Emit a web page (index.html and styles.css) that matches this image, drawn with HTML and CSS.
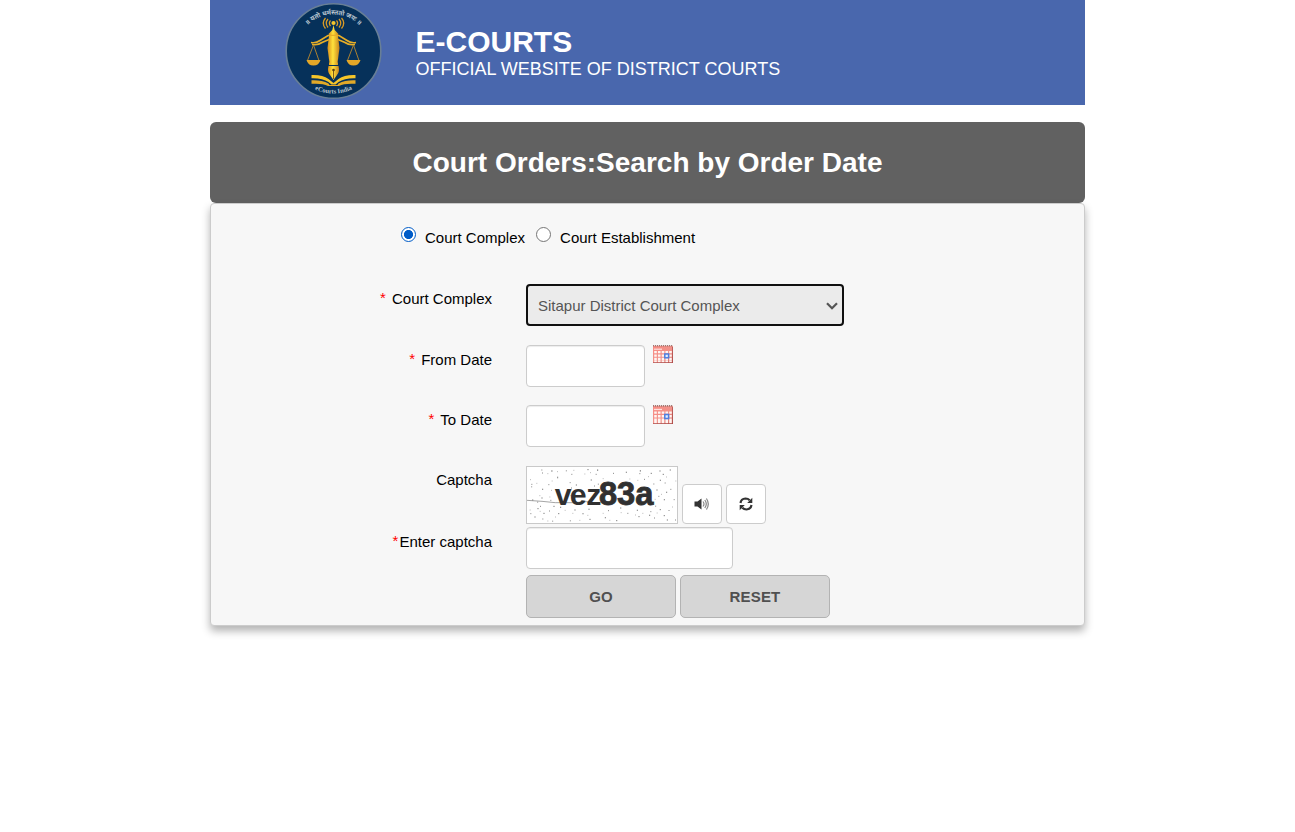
FILE: index.html
```html
<!DOCTYPE html>
<html lang="en">
<head>
<meta charset="utf-8">
<title>Court Orders: Search by Order Date</title>
<link rel="stylesheet" href="styles.css">
</head>
<body>
<svg class="defs" width="0" height="0" aria-hidden="true">
  <defs>
    <linearGradient id="cal-red" x1="0" y1="0" x2="1" y2="1">
      <stop offset="0" stop-color="#f98c84"/><stop offset="0.6" stop-color="#f0928a"/><stop offset="1" stop-color="#cc625e"/>
    </linearGradient>
    <linearGradient id="gold" x1="0" y1="0" x2="1" y2="0">
      <stop offset="0" stop-color="#d98f1a"/><stop offset="0.45" stop-color="#ffe23c"/><stop offset="1" stop-color="#c9831d"/>
    </linearGradient>
    <symbol id="calendar" viewBox="0 0 20 18" preserveAspectRatio="none">
      <rect y="1" width="20" height="17" fill="url(#cal-red)"/>
      <path d="M0 .8h20" stroke="#a57670" stroke-width="1.600" stroke-dasharray="1.200 .8"/>
      <path d="M1 4.200h8" stroke="#ffdfda" stroke-width="1.200"/>
      <path d="M1.200 7.200h17.600M1.200 10.600h17.600M1.200 13.900h17.600M1.200 16.400h17.600" stroke="#fff5f2" stroke-width="2.300" stroke-dasharray="2.600 1.150"/>
      <rect x="11.800" y="9" width="3.800" height="3.800" fill="#e4efff" stroke="#4e7fe0" stroke-width="1.500"/>
      <path d="M19.600 2v16M0 17.700h20" stroke="#a94a48" stroke-width=".8"/>
    </symbol>
  </defs>
</svg>
<div class="page">
  <header class="site-header">
    <svg class="logo" viewBox="0 0 106 106" aria-label="eCourts India">
      <circle cx="53.500" cy="51" r="47.300" fill="#06315a" stroke="#687f96" stroke-width="1.600"/>
      <path id="arc-top" d="M17 51a36.500 36.500 0 0 1 73 0" fill="none"/>
      <path id="arc-bottom" d="M11 51a42.500 42.500 0 0 0 85 0" fill="none"/>
      <text class="seal hindi"><textPath href="#arc-top" startOffset="50%" text-anchor="middle">॥ यतो धर्मस्ततो जयः ॥</textPath></text>
      <text class="seal"><textPath href="#arc-bottom" startOffset="50%" text-anchor="middle">eCourts India</textPath></text>
      <path d="M50.500 20.500q-2.200 2.500 0 5.500M48 19q-3.500 4 0 8.500M45.500 18q-4.500 5 0 10.500M56.500 20.500q2.200 2.500 0 5.500M59 19q3.500 4 0 8.500M61.500 18q4.500 5 0 10.500" fill="none" stroke="#d99b25" stroke-width="1.300"/>
      <circle cx="53.500" cy="23" r="2.100" fill="#f5c62c"/>
      <path d="M53.500 25l1.200 5 3.800 4-1.500 3h-7l-1.500-3 3.800-4z" fill="url(#gold)"/>
      <path d="M31 42.500q5 1 9-2l8-5h11l8 5q4 3 9 2M32 44.500q6 1 10-2l7-3h9l7 3q4 3 10 2" fill="none" stroke="#e6ad27" stroke-width="1.700"/>
      <path d="M49 36h9l1.500 12-2 15h-8l-2-15z" fill="url(#gold)"/>
      <path d="M49 62.500h9v2.500h-9zM48.500 66h10q1.500 6-1.500 9l-3.500 5-3.500-5q-3-3-1.500-9z" fill="url(#gold)"/>
      <path d="M53.500 70v9" stroke="#6c4819" stroke-width=".9"/><circle cx="53.500" cy="70" r="1.300" fill="#5b3d12"/>
      <path d="M33.500 45l-5.800 15M33.500 45l5.300 15M73.500 45l-5.800 15M73.500 45l5.300 15" fill="none" stroke="#a98032" stroke-width="1"/>
      <path d="M26.500 60h14q-1.500 5.500-7 5.500t-7-5.500zM66.500 60h14q-1.500 5.500-7 5.500t-7-5.500z" fill="#e4a728"/>
      <path d="M31.500 75q11-.5 17 4l5 4 5-4q6-4.500 17-4v3.200q-11-.3-17 3.800l-3 2.500h-4l-3-2.500q-6-4.100-17-3.800z" fill="#f5c62a"/>
      <path d="M31.500 80.300q10-.5 17 3.200l1 1.500h8l1-1.500q7-3.700 17-3.200v3.500q-11-.8-16.500 2.200h-11q-5.500-3-16.500-2.200z" fill="#e2a928"/>
    </svg>
    <div class="site-name">
      <div class="site-title">E-COURTS</div>
      <div class="site-subtitle">OFFICIAL WEBSITE OF DISTRICT COURTS</div>
    </div>
  </header>
  <h1 class="heading">Court Orders:Search by Order Date</h1>
  <form class="panel">
    <div class="radios">
      <input class="radio" type="radio" name="scope" id="complex" checked><label class="radio-first" for="complex">Court Complex</label>
      <input class="radio" type="radio" name="scope" id="establishment"><label for="establishment">Court Establishment</label>
    </div>
    <div class="row select-row">
      <label class="label"><span class="star spaced">*</span>Court Complex</label>
      <div class="select-wrap">
        <select class="select"><option>Sitapur District Court Complex</option></select>
        <svg class="chevron" viewBox="0 0 12 8"><path d="M1 1.300L6 6.300l5-5" fill="none" stroke="#555" stroke-width="2.200"/></svg>
      </div>
    </div>
    <div class="row date-row">
      <label class="label"><span class="star spaced">*</span>From Date</label>
      <input class="field date"><svg class="calendar"><use href="#calendar"/></svg>
    </div>
    <div class="row date-row to-row">
      <label class="label"><span class="star spaced">*</span>To Date</label>
      <input class="field date"><svg class="calendar tall"><use href="#calendar"/></svg>
    </div>
    <div class="row captcha-row">
      <label class="label captcha-label">Captcha</label>
      <svg class="captcha" viewBox="18 18 456 174">
        <rect x="19.500" y="19.500" width="453" height="171" fill="#fff" stroke="#c9c9c9" stroke-width="3"/>
        <path class="noise" d="M64 30h3M66 39h3M93 33h5M139 31v3M154 43h3M202 29h4M233 28v5M227 43h3M279 40h3M319 35v4M361 30v5M358 41h3M372 58h3M392 40h4M420 31v4M428 43h4M449 30h4M34 73h3M35 79v3M68 86v4M66 112v4M85 74h3M113 50v5M149 68h3M153 84h3M169 73v4M212 60h4M222 78h3M235 71v3M400 72h3M421 59v4M434 69h3M409 90h4M440 95v4M451 88h3M415 109h3M433 117v4M461 119h3M36 120h4M53 125v3M91 121h3M52 146h4M60 139h3M87 153h3M100 139h4M122 140v4M163 150h4M207 146v4M264 152h3M300 144h4M352 149v4M391 155h3M407 137v3M419 149h4M447 150v3M31 161h3M45 169v4M70 160h4M67 177h3M98 182v3M114 161h4M151 181v3M189 159v4M208 178h4M256 171v4M288 182h4M322 160h3M355 170h4M389 164v4M402 174h3M431 167h4M442 178v4M465 180h3"/>
        <path class="noise faint" d="M82 41h3M111 35h3M160 31h3M193 42h3M210 38h3M248 56h3M328 57h3M352 61h3M384 50h3M438 51h3M466 63h3M30 59h3M49 70h3M95 63h3M93 91h3M58 107h3M88 111h3M151 107h3M404 118h3M423 103h3M456 141h3M410 159h3M367 160h3M345 165h3M302 158h3M268 181h3M248 160h3M202 166h3M178 181h3M157 160h3M134 151h3M105 171h3M82 183h3M59 154h3M29 150h3"/>
        <path d="M21 121l45 3 40 4h55l38-3 35 7" fill="none" stroke="#777" stroke-width="2"/>
        <g class="captcha-text"><text class="captcha-small" x="104 149 199" y="136">vez</text><text x="237 291 346" y="136">83a</text></g>
      </svg>
      <button class="icon-button" type="button" aria-label="Listen"><svg width="16" height="14" viewBox="0 0 16 14"><path d="M.5 4.500h3L7.500 1.500v11L3.500 9.500h-3z" fill="#333"/><path d="M9 4.500q2 2.500 0 5M10.800 3q3 4 0 8M12.400 1.500q3.800 5.500 0 11" fill="none" stroke="#858585" stroke-width="1.200"/></svg></button>
      <button class="icon-button" type="button" aria-label="Refresh"><svg width="14" height="14" viewBox="0 0 14 14"><path d="M1.500 6q.5-4.300 5-4.500 2.500 0 4.200 1.800M12.500 8q-.5 4.300-5 4.500-2.500 0-4.200-1.800" fill="none" stroke="#333" stroke-width="2.200"/><path d="M13.300.8v5.200H8.200zM.7 13.200V8h5.100z" fill="#333"/></svg></button>
    </div>
    <div class="row enter-row">
      <label class="label"><span class="star near">*</span>Enter captcha</label>
      <input class="field answer">
    </div>
    <div class="actions"><button class="button" type="button">GO</button><button class="button" type="button">RESET</button></div>
  </form>
</div>
</body>
</html>
```
FILE: styles.css
```css
* { box-sizing: border-box; }
html { min-height: 100%; background: #fff; }
body { min-height: 100vh; margin: 0; background: #fff; color: #000; font: 15px/20px "Liberation Sans", Arial, sans-serif; }
.defs { display: block; height: 0; }
.page { width: 875px; margin: 0 auto; }
.site-header { height: 105px; display: flex; padding-left: 70px; background: #4967ad; color: #fff; }
.logo { width: 106px; height: 106px; flex: none; }
.seal { fill: #b9c5d0; font: bold 6.500px "Liberation Serif", serif; }
.hindi { font: bold 6.500px "Noto Sans", "Noto Sans Devanagari", sans-serif; }
.site-name { padding: 25px 0 0 29.500px; }
.site-title { font-size: 30px; font-weight: bold; line-height: 33px; }
.site-subtitle { font-size: 18px; line-height: 22px; white-space: nowrap; }
.heading { margin: 17px 0 0; height: 81px; border-radius: 6px; background: #616161; color: #fff; font-size: 28px; line-height: 81px; text-align: center; }
.panel { height: 423px; border: 1px solid #ccc; border-radius: 4px; background: #f7f7f7; box-shadow: 0 5px 8px rgba(0, 0, 0, .3); }
.radios { display: flex; height: 80px; padding: 23px 0 0 190px; }
.radios label { padding-top: 1px; }
.radio { appearance: none; width: 15px; height: 15px; margin: 0 9px 0 0; border: 1px solid #767676; border-radius: 50%; background: #fff; }
.radio:checked { border: 1.500px solid #005cc8; background: radial-gradient(circle, #005cc8 0 4.200px, #fff 4.900px) padding-box; }
.radio-first { margin-right: 11px; }
.row { display: flex; align-items: flex-start; }
.select-row { height: 61px; }
.date-row { height: 60px; }
.to-row { height: 61px; }
.captcha-row { height: 61px; gap: 4px; }
.enter-row { height: 48px; }
.label { width: 281px; margin-right: 34px; padding-top: 5px; text-align: right; flex: none; }
.captcha-label { padding-top: 4px; margin-right: 30px; }
.star { color: #f00; position: relative; top: -1px; }
.spaced { margin-right: 6px; }
.near { margin-right: 1px; }
.select-wrap { position: relative; width: 318px; height: 42px; }
.select { appearance: none; width: 100%; height: 100%; padding: 2px 10px 0; border: 2px solid #101010; border-radius: 4px; background: #ebebeb; color: #555; font: inherit; }
.chevron { position: absolute; right: 6px; top: 18px; width: 12px; height: 8px; pointer-events: none; }
.field { height: 42px; margin: 0; border: 1px solid #ccc; border-radius: 4px; background: #fff; box-shadow: inset 0 1px 1px rgba(0, 0, 0, .075); font: inherit; }
.date { width: 119px; }
.answer { width: 207px; }
.calendar { width: 20px; height: 18px; margin-left: 8px; }
.tall { height: 19px; }
.captcha { width: 152px; height: 58px; flex: none; }
.noise { fill: none; stroke: #888; stroke-width: 3; }
.faint { stroke: #bbb; }
.captcha-text { font: bold 98px "Liberation Sans", Arial, sans-serif; fill: #303030; stroke: #303030; stroke-width: 2.500; }
.captcha-small { font-size: 91px; stroke-width: 0; }
.icon-button { display: flex; align-items: center; justify-content: center; width: 40px; height: 40px; margin-top: 18px; padding: 0; border: 1px solid #ccc; border-radius: 4px; background: #fff; }
.actions { display: flex; gap: 4px; padding-left: 315px; }
.button { width: 150px; height: 43px; padding: 0; border: 1px solid #b3b3b3; border-radius: 5px; background: #d6d6d6; color: #505050; font: bold 15px/20px "Liberation Sans", Arial, sans-serif; letter-spacing: .15px; }
```
